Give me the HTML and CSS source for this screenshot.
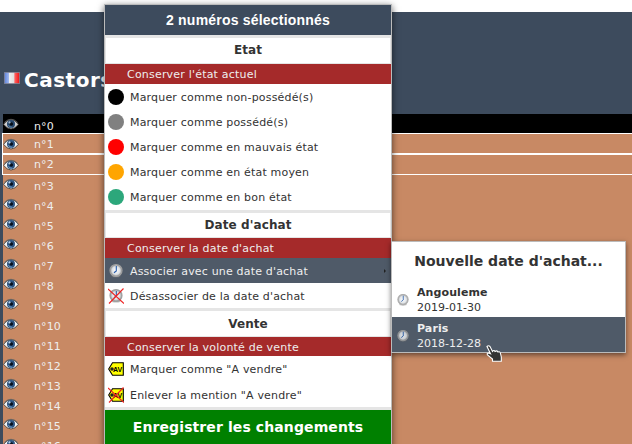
FILE: index.html
```html
<!DOCTYPE html>
<html lang="fr">
<head>
<meta charset="utf-8">
<title>Castors</title>
<link rel="stylesheet" href="styles.css">
</head>
<body>
<svg class="defs" width="0" height="0">
  <defs>
    <radialGradient id="face"><stop offset="0" stop-color="#fff"/><stop offset=".65" stop-color="#dde1e5"/><stop offset="1" stop-color="#888"/></radialGradient>
    <linearGradient id="flag"><stop offset="0" stop-color="#5d83dc"/><stop offset=".32" stop-color="#a9bef0"/><stop offset=".33" stop-color="#eee"/><stop offset=".66" stop-color="#ddd"/><stop offset=".67" stop-color="#f66"/><stop offset="1" stop-color="#e11"/></linearGradient>
  </defs>
  <symbol id="eye" viewBox="0 0 16 12">
    <path d="M.5 6.300Q4 1.500 8 1.500T15.500 6.300Q12 11 8 11T.5 6.300Z" fill="#f2f2f2" stroke="#433c38" stroke-width=".9"/>
    <path d="M1.500 4.300Q8-1.800 14.500 4.300" fill="none" stroke="#666" stroke-width=".9"/>
    <circle cx="8" cy="6.100" r="4" fill="#2d5480"/>
    <circle cx="8.300" cy="6" r="1.800" fill="#07101c"/>
    <path d="M5.500 7.300Q6.500 9.500 9 9.200" fill="none" stroke="#6f9cc8" stroke-width="1"/>
    <circle cx="6.500" cy="4.400" r="1.100" fill="#b9d2e8"/>
  </symbol>
  <symbol id="clock" viewBox="0 0 16 16">
    <ellipse cx="8" cy="13.300" rx="4.500" ry="1.300" fill="#777" opacity=".5"/>
    <circle cx="8" cy="7.500" r="6" fill="url(#face)" stroke="#a0a0a0" stroke-width="1.200"/>
    <path d="M8.300 3V8L6 9.800" fill="none" stroke="#2459a8" stroke-width="1.100"/>
  </symbol>
  <symbol id="tag" viewBox="0 0 16 16">
    <path d="M.7 8 4.500 1.700H15.300V14.300H4.500Z" fill="#ff0" stroke="#000" stroke-width="1.100"/>
    <circle cx="4" cy="8" r="1.800" fill="#222"/>
    <text class="tag-text" x="5" y="10.800">AV</text>
  </symbol>
  <symbol id="cross" viewBox="0 0 16 16"><path d="M0 1 16 15.500M15.500 .5 1 15.500" stroke="#e22" stroke-width="1.100"/></symbol>
</svg>

<main class="page">
  <header class="heading">
    <svg class="flag" viewBox="0 0 16 12"><rect x=".5" y=".5" width="15" height="11" fill="url(#flag)" stroke="#8c8c9c" stroke-opacity=".7"/></svg>
    <h1>Castors</h1>
  </header>
  <ul class="issues">
    <li class="issue missing"><svg class="eye"><use href="#eye"/></svg><span>n°0</span></li>
    <li class="issue selected"><svg class="eye"><use href="#eye"/></svg><span>n°1</span></li>
    <li class="issue selected"><svg class="eye"><use href="#eye"/></svg><span>n°2</span></li>
    <li class="issue"><svg class="eye"><use href="#eye"/></svg><span>n°3</span></li>
    <li class="issue"><svg class="eye"><use href="#eye"/></svg><span>n°4</span></li>
    <li class="issue"><svg class="eye"><use href="#eye"/></svg><span>n°5</span></li>
    <li class="issue"><svg class="eye"><use href="#eye"/></svg><span>n°6</span></li>
    <li class="issue"><svg class="eye"><use href="#eye"/></svg><span>n°7</span></li>
    <li class="issue"><svg class="eye"><use href="#eye"/></svg><span>n°8</span></li>
    <li class="issue"><svg class="eye"><use href="#eye"/></svg><span>n°9</span></li>
    <li class="issue"><svg class="eye"><use href="#eye"/></svg><span>n°10</span></li>
    <li class="issue"><svg class="eye"><use href="#eye"/></svg><span>n°11</span></li>
    <li class="issue"><svg class="eye"><use href="#eye"/></svg><span>n°12</span></li>
    <li class="issue"><svg class="eye"><use href="#eye"/></svg><span>n°13</span></li>
    <li class="issue"><svg class="eye"><use href="#eye"/></svg><span>n°14</span></li>
    <li class="issue"><svg class="eye"><use href="#eye"/></svg><span>n°15</span></li>
    <li class="issue"><svg class="eye"><use href="#eye"/></svg><span>n°16</span></li>
  </ul>
</main>

<div class="menu">
  <div class="menu-header">2 numéros sélectionnés</div>
  <section class="group">
    <h2>Etat</h2>
    <div class="keep">Conserver l'état actuel</div>
    <div class="item"><i class="dot black"></i><span>Marquer comme non-possédé(s)</span></div>
    <div class="item"><i class="dot gray"></i><span>Marquer comme possédé(s)</span></div>
    <div class="item"><i class="dot red"></i><span>Marquer comme en mauvais état</span></div>
    <div class="item"><i class="dot orange"></i><span>Marquer comme en état moyen</span></div>
    <div class="item"><i class="dot green"></i><span>Marquer comme en bon état</span></div>
  </section>
  <section class="group">
    <h2>Date d'achat</h2>
    <div class="keep">Conserver la date d'achat</div>
    <div class="item active"><svg class="icon"><use href="#clock"/></svg><span>Associer avec une date d'achat</span><i class="arrow"></i></div>
    <div class="item"><svg class="icon"><use href="#clock"/><use href="#cross"/></svg><span>Désassocier de la date d'achat</span></div>
  </section>
  <section class="group sale">
    <h2>Vente</h2>
    <div class="keep">Conserver la volonté de vente</div>
    <div class="item"><svg class="icon"><use href="#tag"/></svg><span>Marquer comme "A vendre"</span></div>
    <div class="item"><svg class="icon"><use href="#tag"/><use href="#cross"/></svg><span>Enlever la mention "A vendre"</span></div>
  </section>
  <div class="save">Enregistrer les changements</div>
</div>

<div class="submenu">
  <h3>Nouvelle date d'achat...</h3>
  <div class="date"><svg class="small-clock" viewBox="1 1 14 14"><use href="#clock" width="16" height="16"/></svg><div><b>Angouleme</b><br>2019-01-30</div></div>
  <div class="date chosen"><svg class="small-clock" viewBox="1 1 14 14"><use href="#clock" width="16" height="16"/></svg><div><b>Paris</b><br>2018-12-28</div></div>
</div>
<svg class="cursor" viewBox="0 0 16 18"><path d="M1 1.500Q2.500 0 4 1.500L6.500 6.500Q8 4.500 9 6.500Q11 5 12 7Q14 6 14.500 8.500L15.300 12V16.300H6.500V14L1.500 10Q.5 8 2.500 8L4.500 8.800Z" fill="#333" stroke="#fff" stroke-width="1.100"/></svg>
</body>
</html>
```
FILE: styles.css
```css
* { box-sizing: border-box; }

body {
  margin: 0;
  padding-top: 12px;
  height: 444px;
  overflow: hidden;
  background: #fff;
  font: 11px/15px "DejaVu Sans", sans-serif;
  color: #333;
}

h1, h2, h3, ul { margin: 0; padding: 0; }

.defs { position: absolute; }

.page {
  height: 432px;
  overflow: hidden;
  background: #3d4b5d;
}

.heading {
  display: flex;
  height: 102px;
  padding: 56px 0 0 4px;
  gap: 4px;
  color: #fff;
}

.heading h1 { font-size: 20px; line-height: 24px; letter-spacing: .5px; }

.flag { width: 16px; height: 12px; margin-top: 4px; }

.issues {
  margin-left: 2px;
  list-style: none;
  color: #eee;
}

.issue {
  display: flex;
  height: 20px;
  padding: 2px 0 0;
  gap: 15px;
  border-left: 1px solid #3d4b5d;
  background: #c88964;
}

.issue span { line-height: 19px; letter-spacing: .1px; }
.eye { width: 16px; height: 12px; margin-top: 1px; }
.missing { height: 19px; background: #000; }
.missing .eye { margin-top: 2px; opacity: .85; }
.missing span { line-height: 21px; }

.selected {
  height: 21px;
  padding-top: 1px;
  border: 1px solid #fff;
  border-right: 0;
}

.selected .eye { margin-top: 3px; }
.selected span { line-height: 19px; }
.selected + .selected span { line-height: 18px; }

.menu {
  position: absolute;
  left: 104px;
  top: 4px;
  width: 288px;
  height: 460px;
  border: 1px solid #bbb;
  background: #fff;
  box-shadow: 0 2px 7px rgba(0, 0, 0, .6);
}

.menu-header {
  height: 30px;
  background: #3d4b5d;
  color: #fff;
  font: bold 14px/30px "Liberation Sans", sans-serif;
  letter-spacing: .2px;
  text-align: center;
}

.group {
  border-top: 3px solid #e5e5e5;
  height: 175px;
}

.group h2 {
  height: 26px;
  border: 1px solid #e5e5e5;
  border-top: 0;
  font-size: 12px;
  line-height: 25px;
  letter-spacing: .1px;
  text-align: center;
}

.keep {
  height: 20px;
  padding-left: 22px;
  background: #a52a2a;
  color: #eee;
  line-height: 21px;
  letter-spacing: .2px;
}

.item {
  display: flex;
  align-items: center;
  height: 25px;
  padding-left: 3px;
  gap: 6px;
}

.item span { padding-top: 1px; letter-spacing: .18px; }

.group:nth-of-type(2) { height: 98px; }
.group:nth-of-type(2) h2 { height: 25px; line-height: 24px; }
.sale { height: 99px; }
.group.sale h2 { line-height: 26px; }
.sale .item { height: 26px; }
.sale .item span { padding-top: 0; }
.sale .keep { height: 19px; }

.dot { width: 16px; height: 16px; border-radius: 50%; }
.black { background: #000; }
.gray { background: #808080; }
.red { background: #f00; }
.orange { background: #ffa500; }
.green { background: #2ca77b; }

.active { background: #4f5a68; color: #eee; }
.icon { width: 16px; height: 16px; }

.arrow {
  margin-left: auto;
  margin-right: 5px;
  border: 2px solid transparent;
  border-left-color: #222;
  border-right: 0;
}

.tag-text { font: bold 7px "Liberation Sans", sans-serif; }

.save {
  height: 52px;
  border-top: 3px solid #e5e5e5;
  background: green;
  color: #fff;
  font-size: 14px;
  font-weight: bold;
  line-height: 34px;
  letter-spacing: .1px;
  text-align: center;
}

.submenu {
  position: absolute;
  left: 391px;
  top: 241px;
  width: 235px;
  height: 112px;
  border: 1px solid #bbb;
  background: #fff;
  box-shadow: 0 2px 5px rgba(0, 0, 0, .5);
}

.submenu h3 {
  height: 39px;
  font-size: 14px;
  line-height: 38px;
  text-align: center;
}

.date {
  display: flex;
  align-items: center;
  height: 36px;
  padding: 1px 0 0 5px;
  gap: 8px;
}

.date b { letter-spacing: .1px; }
.chosen { height: 35px; padding-top: 2px; background: #4f5a68; color: #eee; }
.small-clock { width: 12px; height: 12px; opacity: .85; }

.cursor {
  position: absolute;
  left: 486px;
  top: 345px;
  width: 16px;
  height: 18px;
}
```
